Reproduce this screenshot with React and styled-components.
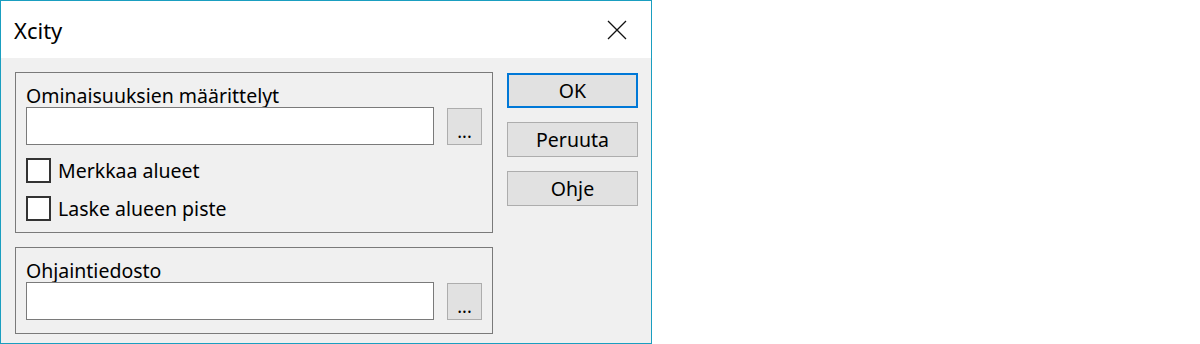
import React from 'react'
import styled, { createGlobalStyle } from 'styled-components'

const GlobalStyle = createGlobalStyle`
  html, body {
    margin: 0;
    padding: 0;
    background: #ffffff;
  }
  body {
    font-family: 'Noto Sans', 'Open Sans', sans-serif;
    color: #000;
  }
`

const Window = styled.div`
  width: 650px;
  height: 342px;
  border: 1px solid #1a9ec0;
  background: #f0f0f0;
  display: flex;
  flex-direction: column;
`

const TitleBar = styled.div`
  height: 57px;
  background: #fff;
  display: flex;
  align-items: center;
  justify-content: space-between;
  padding: 0 24px 0 13px;
  font-size: 22px;
`

const CloseIcon = () => (
  <svg width='20' height='20' viewBox='0 0 20 20'>
    <path d='M1 1 L19 19 M19 1 L1 19' stroke='#111' strokeWidth='1.3' />
  </svg>
)

const Body = styled.div`
  flex: 1;
  display: flex;
  gap: 14px;
  padding: 14px 14px 0 14px;
`

const Groups = styled.div`
  width: 478px;
  display: flex;
  flex-direction: column;
  gap: 14px;
`

const Group = styled.div`
  border: 1px solid #7a7a7a;
  height: ${(p) => p.h}px;
  box-sizing: border-box;
  padding: 11px 10px 0 10px;
  font-size: 19.5px;
`

const Label = styled.div`
  line-height: 24px;
  height: 23px;
`

const FieldRow = styled.div`
  display: flex;
  align-items: flex-start;
  gap: 13px;
`

const Input = styled.div`
  width: 409px;
  height: 38px;
  box-sizing: border-box;
  border: 1px solid #7a7a7a;
  background: #fff;
`

const SmallButton = styled.div`
  width: 35px;
  height: 37px;
  margin-top: 1px;
  box-sizing: border-box;
  border: 1px solid #adadad;
  background: #e1e1e1;
  display: flex;
  justify-content: center;
  padding-top: 10px;
  font-size: 18px;
  line-height: 24px;
`

const Check = styled.div`
  display: flex;
  align-items: center;
  gap: 7px;
  height: 25px;
  margin-top: ${(p) => p.mt}px;
`

const Box = styled.div`
  width: 25px;
  height: 25px;
  box-sizing: border-box;
  border: 2px solid #333;
  background: #fff;
`

const Buttons = styled.div`
  display: flex;
  flex-direction: column;
  gap: 14px;
  padding-top: 1px;
`

const Button = styled.div`
  width: 131px;
  height: 35px;
  box-sizing: border-box;
  border: ${(p) => (p.primary ? '2px solid #0078d7' : '1px solid #adadad')};
  background: #e1e1e1;
  display: flex;
  align-items: center;
  justify-content: center;
  font-size: 19.5px;
`

export default function App() {
  return (
    <>
      <GlobalStyle />
      <Window>
        <TitleBar>
          <span>Xcity</span>
          <CloseIcon />
        </TitleBar>
        <Body>
          <Groups>
            <Group h={161}>
              <Label>Ominaisuuksien määrittelyt</Label>
              <FieldRow>
                <Input />
                <SmallButton>...</SmallButton>
              </FieldRow>
              <Check mt={13}>
                <Box />
                <span>Merkkaa alueet</span>
              </Check>
              <Check mt={13}>
                <Box />
                <span>Laske alueen piste</span>
              </Check>
            </Group>
            <Group h={87}>
              <Label>Ohjaintiedosto</Label>
              <FieldRow>
                <Input />
                <SmallButton>...</SmallButton>
              </FieldRow>
            </Group>
          </Groups>
          <Buttons>
            <Button primary>OK</Button>
            <Button>Peruuta</Button>
            <Button>Ohje</Button>
          </Buttons>
        </Body>
      </Window>
    </>
  )
}
